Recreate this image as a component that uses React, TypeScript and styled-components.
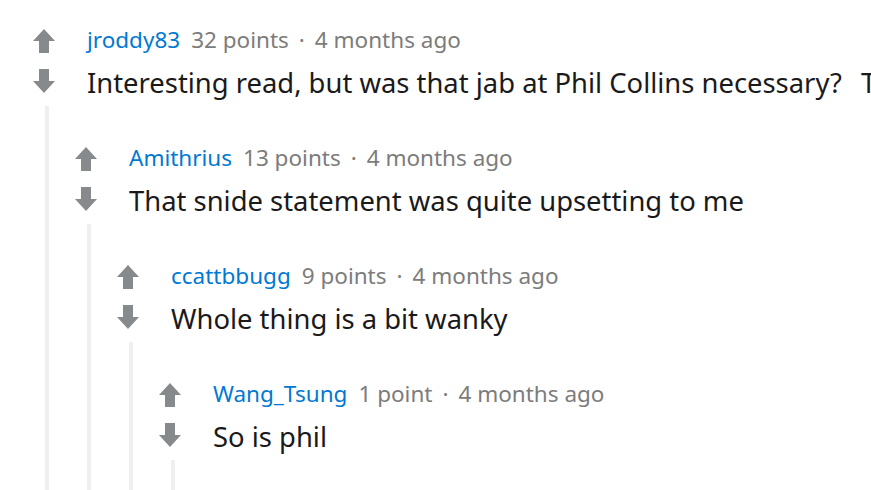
import React from "react";
import styled, { createGlobalStyle } from "styled-components";

const Global = createGlobalStyle`
  html, body { margin: 0; padding: 0; background: #ffffff; }
  body { font-family: "Noto Sans", "Open Sans", sans-serif; overflow: hidden; }
`;

const Page = styled.div`
  width: 871px;
  height: 490px;
  overflow: hidden;
  padding: 26px 0 0 32px;
  box-sizing: border-box;
`;

const CommentBlock = styled.div`
  display: flex;
  flex-direction: column;
`;

const Row = styled.div`
  display: grid;
  grid-template-columns: 24px 1fr;
  column-gap: 31px;
`;

const Votes = styled.div`
  display: flex;
  flex-direction: column;
  align-items: center;
  gap: 14px;
  padding-top: 2px;
`;

const VoteButton = styled.button`
  border: 0;
  padding: 0;
  margin: 0;
  background: none;
  width: 24px;
  height: 26px;
  display: flex;
  color: #878a8c;
  cursor: pointer;
  svg { display: block; }
`;

const Content = styled.div`
  display: flex;
  flex-direction: column;
  gap: 11px;
  min-width: 0;
`;

const Meta = styled.div`
  font-size: 22.5px;
  line-height: 28px;
  color: #7c7c7c;
  white-space: nowrap;
`;

const Author = styled.a`
  color: #0079d3;
  text-decoration: none;
  margin-right: 11px;
`;

const Dot = styled.span`
  margin: 0 10px;
`;

const Body = styled.p`
  margin: 0;
  font-size: 27.4px;
  line-height: 36px;
  color: #1a1a1b;
  white-space: nowrap;
`;

const Gap = styled.span`
  margin-left: 12px;
`;

const Children = styled.div`
  margin: 5px 0 0 13px;
  border-left: 4px solid #edeff1;
  padding: 38px 0 0 25px;
  min-height: 40px;
`;

const Arrow = ({ down }: { down?: boolean }) => (
  <svg width="24" height="26" viewBox="0 0 24 26" fill="currentColor">
    {down ? (
      <path d="M7 1 H17 V13 H23 L12 25 L1 13 H7 Z" />
    ) : (
      <path d="M12 1 L23 13 H17 V25 H7 V13 H1 Z" />
    )}
  </svg>
);

type C = { author: string; points: string; text: string; more?: string; children?: C };

const data: C = {
  author: "jroddy83",
  points: "32 points",
  text: "Interesting read, but was that jab at Phil Collins necessary?",
  more: "The man has feelings too",
  children: {
    author: "Amithrius",
    points: "13 points",
    text: "That snide statement was quite upsetting to me",
    children: {
      author: "ccattbbugg",
      points: "9 points",
      text: "Whole thing is a bit wanky",
      children: {
        author: "Wang_Tsung",
        points: "1 point",
        text: "So is phil",
      },
    },
  },
};

const Comment = ({ c }: { c: C }) => (
  <CommentBlock>
    <Row>
      <Votes>
        <VoteButton aria-label="upvote">
          <Arrow />
        </VoteButton>
        <VoteButton aria-label="downvote">
          <Arrow down />
        </VoteButton>
      </Votes>
      <Content>
        <Meta>
          <Author href="#">{c.author}</Author>
          {c.points}
          <Dot>·</Dot>4 months ago
        </Meta>
        <Body>
          {c.text}
          {c.more ? <Gap> {c.more}</Gap> : null}
        </Body>
      </Content>
    </Row>
    <Children>{c.children ? <Comment c={c.children} /> : null}</Children>
  </CommentBlock>
);

export default function App() {
  return (
    <>
      <Global />
      <Page>
        <Comment c={data} />
      </Page>
    </>
  );
}
